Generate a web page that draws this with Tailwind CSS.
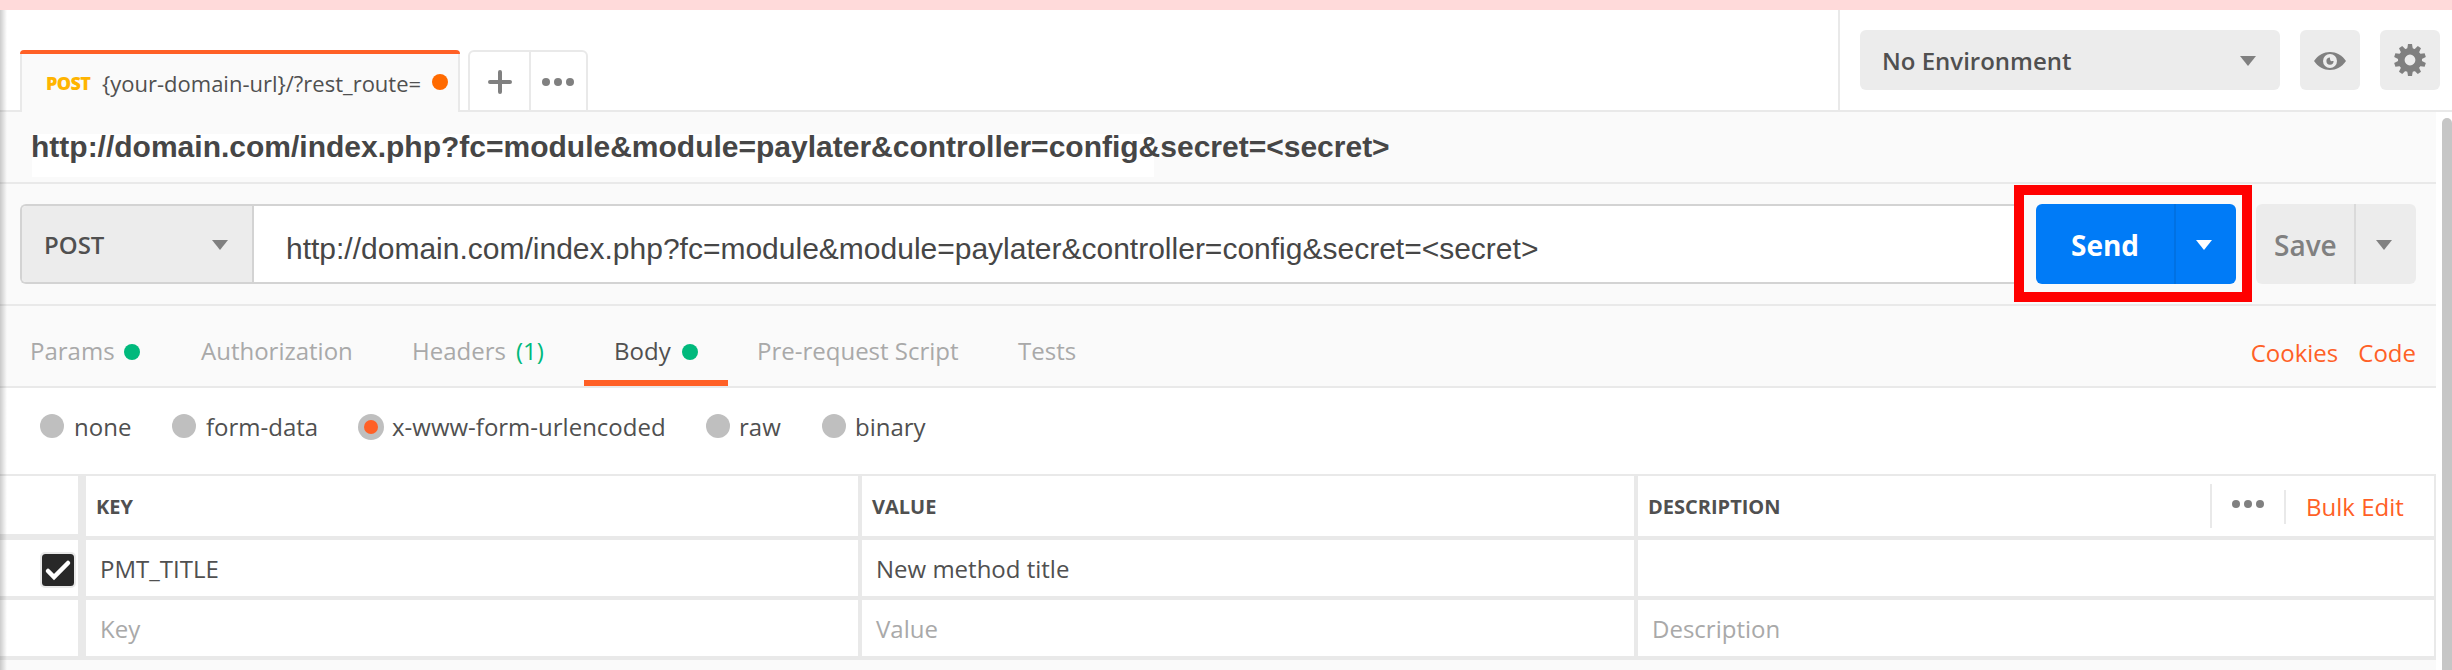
<!DOCTYPE html>
<html lang="en">
<head>
<meta charset="utf-8">
<title>Request builder</title>
<script src="https://cdn.jsdelivr.net/npm/@tailwindcss/browser@4"></script>
</head>
<body class="relative flex h-[670px] w-[2452px] flex-col overflow-hidden bg-[#fafafa] font-['Open_Sans',sans-serif] text-[24px] leading-[32px] whitespace-nowrap text-[#505050]">
  <div class="h-[10px] shrink-0 bg-[#ffdada]"></div>

  <!-- Tab strip and environment bar -->
  <header class="flex h-[102px] shrink-0 bg-white">
    <div class="w-5 border-b-2 border-[#e9e9e9]"></div>
    <div class="mt-10 flex h-[62px] w-[440px] flex-col overflow-hidden rounded-t-[4px] bg-[#fafafa]">
      <div class="h-1 bg-[#ff6026]"></div>
      <div class="flex flex-1 items-center border-x-2 border-[#e9e9e9] pl-6">
        <span class="w-[56px] text-[18px] font-extrabold tracking-[-0.6px] text-[#ffb400]">POST</span>
        <span class="w-[320px] overflow-hidden text-[22px]">{your-domain-url}/?rest_route=</span>
        <span class="mb-[2px] ml-[10px] size-4 rounded-full bg-[#ff6a00]"></span>
      </div>
    </div>
    <div class="w-2 border-b-2 border-[#e9e9e9]"></div>
    <div class="mt-10 flex h-[62px] w-[120px] rounded-t-[6px] border-2 border-[#e9e9e9]">
      <div class="flex w-[61px] items-center justify-center border-r-2 border-[#e9e9e9]">
        <svg class="mb-[-2px] size-6" viewBox="0 0 24 24" stroke="#808080" stroke-width="4" stroke-linecap="round"><path d="M12 2v20M2 12h20"/></svg>
      </div>
      <div class="flex flex-1 items-center justify-center gap-1 pt-[2px] pr-px">
        <i class="size-2 rounded-full bg-[#808080]"></i><i class="size-2 rounded-full bg-[#808080]"></i><i class="size-2 rounded-full bg-[#808080]"></i>
      </div>
    </div>
    <div class="w-[1250px] border-b-2 border-[#e9e9e9]"></div>
    <div class="flex flex-1 gap-5 border-b-2 border-l-2 border-[#e9e9e9] pt-5 pl-5">
      <div class="flex h-[60px] w-[420px] items-center justify-between rounded-[6px] bg-[#ececec] pr-6 pl-[22px]">
        <span class="pt-[2px] font-semibold">No Environment</span>
        <svg class="mt-[2px] h-[10px] w-4" viewBox="0 0 16 10"><path d="M0 0h16L8 10z" fill="#808080"/></svg>
      </div>
      <div class="flex size-[60px] items-center justify-center rounded-[6px] bg-[#ececec]">
        <svg class="mt-[2px] h-[18px] w-8" viewBox="0 0 32 18"><path d="M0 9C4 3 10 0 16 0s12 3 16 9c-4 6-10 9-16 9S4 15 0 9z" fill="#808080"/><circle cx="16" cy="9" r="7" fill="#ececec"/><path d="M16 5.500a3.600 3.600 0 1 0 3.600 3.600h-1.200a2 2 0 0 1-2.400-2z" fill="#808080"/></svg>
      </div>
      <div class="flex size-[60px] items-center justify-center rounded-[6px] bg-[#ececec]">
        <svg class="size-8" viewBox="-16 -16 32 32"><g fill="#808080"><path id="tooth" d="M-2-16h4l1 6h-6z"/><use href="#tooth" transform="rotate(36)"/><use href="#tooth" transform="rotate(72)"/><use href="#tooth" transform="rotate(108)"/><use href="#tooth" transform="rotate(144)"/><use href="#tooth" transform="rotate(180)"/><use href="#tooth" transform="rotate(216)"/><use href="#tooth" transform="rotate(252)"/><use href="#tooth" transform="rotate(288)"/><use href="#tooth" transform="rotate(324)"/></g><circle r="8.700" fill="none" stroke="#808080" stroke-width="6.600"/></svg>
      </div>
    </div>
  </header>

  <div class="flex flex-1">
    <main class="flex w-[2436px] flex-col">
      <!-- Request name -->
      <div class="flex h-[72px] border-b-2 border-[#e9e9e9] pt-[22px] pl-8">
        <div class="h-[43px] w-[1122px] bg-white"><span class="-ml-px block font-['Liberation_Sans',sans-serif] text-[30px] leading-[25px] font-bold text-[#464646]">http://domain.com/index.php?fc=module&amp;module=paylater&amp;controller=config&amp;secret=&lt;secret&gt;</span></div>
      </div>

      <!-- Address bar -->
      <div class="flex h-[122px] border-b-2 border-[#e9e9e9] pt-5 pl-5">
        <div class="flex h-20 w-[1994px] rounded-l-[6px] border-2 border-r-0 border-[#d3d3d3] bg-white">
          <div class="flex w-[232px] items-center justify-between rounded-l-[4px] border-r-2 border-[#d3d3d3] bg-[#ececec] pr-6 pl-[22px]">
            <span class="pt-px font-semibold">POST</span>
            <svg class="mt-[2px] h-[10px] w-4" viewBox="0 0 16 10"><path d="M0 0h16L8 10z" fill="#808080"/></svg>
          </div>
          <span class="pt-[28px] pl-8 font-['Liberation_Sans',sans-serif] text-[30px] leading-[30px] text-[#464646]">http://domain.com/index.php?fc=module&amp;module=paylater&amp;controller=config&amp;secret=&lt;secret&gt;</span>
        </div>
        <div class="-mt-[19px] h-[117px] w-[238px] border-[10px] border-[#ff0000] pt-[9px] pl-3">
          <div class="flex h-20 w-[200px] overflow-hidden rounded-[6px] bg-[#007bf7] text-white">
            <div class="flex w-[140px] items-center border-r-2 border-[#0071e3] pt-[2px] pl-[35px] text-[28px] font-bold">Send</div>
            <div class="flex flex-1 items-center pt-[2px] pl-5"><svg class="h-[10px] w-4" viewBox="0 0 16 10"><path d="M0 0h16L8 10z" fill="#fff"/></svg></div>
          </div>
        </div>
        <div class="ml-1 flex h-20 w-[160px] overflow-hidden rounded-[6px] bg-[#ececec] text-[#808080]">
          <div class="flex w-[100px] items-center border-r-2 border-[#dadada] pt-[2px] pl-[18px] text-[28px] font-semibold">Save</div>
          <div class="flex flex-1 items-center pt-[2px] pl-5"><svg class="h-[10px] w-4" viewBox="0 0 16 10"><path d="M0 0h16L8 10z" fill="#808080"/></svg></div>
        </div>
      </div>

      <!-- Request sections -->
      <nav class="flex h-[82px] border-b-2 border-[#e9e9e9] pl-[30px] text-[#a9a9a9]">
        <div class="flex w-[171px] items-center pt-[10px]"><span class="w-[94px]">Params</span><i class="mb-[-2px] size-4 rounded-full bg-[#00b97c]"></i></div>
        <div class="flex w-[211px] items-center pt-[10px]">Authorization</div>
        <div class="flex w-[172px] items-center pt-[10px]"><span class="w-[104px]">Headers</span><span class="text-[#00b97c]">(1)</span></div>
        <div class="flex w-[144px] items-center border-b-[6px] border-[#ff6026] pt-4 pl-[30px] text-[#505050]"><span class="w-[68px]">Body</span><i class="mb-[-2px] size-4 rounded-full bg-[#00b97c]"></i></div>
        <div class="flex w-[290px] items-center pt-[10px] pl-[29px]">Pre-request Script</div>
        <div class="flex flex-1 items-center pt-[10px]">Tests</div>
        <div class="flex items-center gap-5 pt-[14px] pr-5 text-[#ff6026]"><span>Cookies</span><span>Code</span></div>
      </nav>

      <!-- Body type -->
      <div class="flex h-[86px] items-start bg-white pt-[26px] pl-10">
        <div class="flex w-[132px]"><i class="size-6 rounded-full bg-[#bfbfbf]"></i><span class="-mt-[3px] pl-[10px]">none</span></div>
        <div class="flex w-[186px]"><i class="size-6 rounded-full bg-[#bfbfbf]"></i><span class="-mt-[3px] pl-[10px]">form-data</span></div>
        <div class="flex w-[348px]"><i class="flex size-[26px] items-center justify-center rounded-full bg-[#bfbfbf]"><b class="size-[14px] rounded-full bg-[#ff6026]"></b></i><span class="-mt-[3px] pl-[8px]">x-www-form-urlencoded</span></div>
        <div class="flex w-[116px]"><i class="size-6 rounded-full bg-[#bfbfbf]"></i><span class="-mt-[3px] pl-[9px]">raw</span></div>
        <div class="flex"><i class="size-6 rounded-full bg-[#bfbfbf]"></i><span class="-mt-[3px] pl-[9px]">binary</span></div>
      </div>

      <!-- Parameters table -->
      <div class="grid h-[186px] grid-cols-[78px_772px_772px_796px] grid-rows-[60px_56px_56px] gap-x-1 gap-y-1 border-t-2 border-r-2 border-b-4 border-[#e9e9e9] bg-[#e9e9e9]">
        <div class="h-[58px] bg-white"></div>
        <div class="ml-1 flex w-[772px] items-center bg-white pt-[2px] pl-[10px] text-[20px] font-bold">KEY</div>
        <div class="ml-1 flex w-[772px] items-center bg-white pt-[2px] pl-[10px] text-[20px] font-bold">VALUE</div>
        <div class="ml-1 flex w-[796px] bg-white">
          <span class="flex flex-1 items-center pt-[2px] pl-[10px] text-[20px] font-bold">DESCRIPTION</span>
          <div class="mt-2 flex h-11 w-[74px] justify-center gap-1 border-l-2 border-[#e9e9e9] pt-4"><i class="size-2 rounded-full bg-[#808080]"></i><i class="size-2 rounded-full bg-[#808080]"></i><i class="size-2 rounded-full bg-[#808080]"></i></div>
          <div class="mt-[14px] h-[34px] w-[150px] border-l-2 border-[#e9e9e9] pt-px pl-[20px] text-[#ff6026]">Bulk Edit</div>
        </div>

        <div class="flex items-center justify-end bg-white pt-[3px] pr-[2px]">
          <svg class="size-9" viewBox="0 0 36 36"><rect width="36" height="36" rx="5" fill="#e9e9e9"/><rect x="2" y="2" width="32" height="32" rx="3.500" fill="#282828"/><path d="M8 19l6 6L28 11" fill="none" stroke="#fff" stroke-width="4.500" stroke-linecap="round"/></svg>
        </div>
        <div class="ml-1 flex w-[772px] items-center bg-white pt-[2px] pl-[14px]">PMT_TITLE</div>
        <div class="ml-1 flex w-[772px] items-center bg-white pt-[2px] pl-[14px]">New method title</div>
        <div class="ml-1 w-[796px] bg-white"></div>

        <div class="bg-white"></div>
        <div class="ml-1 flex w-[772px] items-center bg-white pt-[2px] pl-[14px] text-[#a9a9a9]">Key</div>
        <div class="ml-1 flex w-[772px] items-center bg-white pt-[2px] pl-[14px] text-[#a9a9a9]">Value</div>
        <div class="ml-1 flex w-[796px] items-center bg-white pt-[2px] pl-[14px] text-[#a9a9a9]">Description</div>
      </div>
    </main>
    <div class="flex flex-1 justify-end bg-white pt-[6px]"><div class="w-[10px] rounded-t-[5px] bg-[#c6c6c6]"></div></div>
  </div>

  <div class="absolute top-[10px] bottom-0 left-0 w-[7px] bg-linear-to-r from-black/20 to-transparent"></div>
</body>
</html>
